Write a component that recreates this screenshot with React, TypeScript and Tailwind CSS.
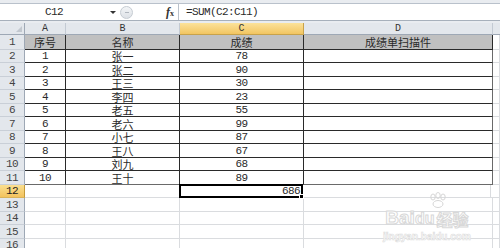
import React from 'react';

const numFont = { fontFamily: '"Liberation Mono", "Noto Sans CJK SC", monospace' };

const rows: [string, string, string][] = [
  ['1', '张一', '78'],
  ['2', '张二', '90'],
  ['3', '王三', '30'],
  ['4', '李四', '23'],
  ['5', '老五', '55'],
  ['6', '老六', '99'],
  ['7', '小七', '87'],
  ['8', '王八', '67'],
  ['9', '刘九', '68'],
  ['10', '王十', '89'],
];

// rows 2..16 alternate 13/14px so lines land on whole pixels
const heights = ['h-[13px]', 'h-[14px]'];

function RowHead({ n, active }: { n: number; active?: boolean }) {
  return (
    <div
      className={`w-[25px] shrink-0 flex items-center justify-center border-r border-b text-[11px] leading-[12px] tracking-[-0.6px] ${
        active
          ? 'bg-gradient-to-b from-[#fadf8f] to-[#f3c35e] border-r-[#c39a3a] border-b-[#d9b35a] text-[#222]'
          : 'bg-[#e3e7ec] border-r-[#9ea8b5] border-b-[#c9cfd7] text-[#444]'
      }`}
      style={numFont}
    >
      {n}
    </div>
  );
}

function Watermark() {
  return (
    <div className="absolute left-[383px] top-[192px] flex flex-col items-center pointer-events-none select-none">
      <svg width="22" height="16" viewBox="0 0 22 16" className="ml-[22px]">
        <g fill="none" stroke="#d6d6d6" strokeWidth="1">
          <ellipse cx="6" cy="5" rx="2.2" ry="3" />
          <ellipse cx="11" cy="3.5" rx="2.2" ry="3" />
          <ellipse cx="16" cy="5" rx="2.2" ry="3" />
          <ellipse cx="11" cy="12" rx="5" ry="3.5" />
        </g>
      </svg>
      <div
        className="flex items-end leading-none text-[19px] font-bold text-white"
        style={{ fontFamily: 'Arial, "Liberation Sans", sans-serif', WebkitTextStroke: '1px #d8d8d8' }}
      >
        <span>Bai</span>
        <span className="text-[16px]">du</span>
        <span className="ml-[2px] text-[16px]" style={{ fontFamily: '"Noto Sans CJK SC", sans-serif' }}>
          经验
        </span>
      </div>
      <div
        className="mt-[5px] text-[10px] leading-none text-white font-bold"
        style={{ fontFamily: 'Arial, "Liberation Sans", sans-serif', WebkitTextStroke: '0.6px #dcdcdc' }}
      >
        jingyan.baidu.com
      </div>
    </div>
  );
}

export default function App() {
  const grid = 'border-r border-b border-[#dadcdf]';
  const dark = 'border-r border-b border-[#2a2a2a]';
  const last = 'border-b-[#6a6a6a]';

  return (
    <div
      className="relative w-[500px] h-[248px] overflow-hidden bg-white text-[#2a2a2a]"
      style={{ fontFamily: '"Noto Sans CJK SC", sans-serif' }}
    >
      {/* ribbon edge */}
      <div className="h-[4px] bg-[#e9ecf0] border-b border-[#b9c1cb]" />

      {/* formula bar */}
      <div className="h-[17px] flex bg-white border-b border-[#a7b0bb]">
        <div className="w-[108px] flex items-center justify-center text-[11px] tracking-[-0.6px]" style={numFont}>
          C12
        </div>
        <div className="w-[10px] flex items-center justify-center">
          <span className="block w-0 h-0 border-l-[3px] border-r-[3px] border-t-[3px] border-l-transparent border-r-transparent border-t-[#333]" />
        </div>
        <div className="w-[45px] flex items-center pl-[2px]">
          <div className="w-[13px] h-[13px] rounded-full bg-gradient-to-b from-[#f3f5f7] to-[#dde1e6] border border-[#c5cbd2] flex items-center justify-center">
            <span className="block w-[4px] h-[1px] bg-[#b0b6be]" />
          </div>
        </div>
        <div className="w-[14px] flex items-center justify-center">
          <span className="text-[12px] leading-none italic font-bold text-[#333]" style={{ fontFamily: '"Liberation Serif", serif' }}>
            f<span className="text-[8px] not-italic">x</span>
          </span>
        </div>
        <div className="w-[2px] border-r border-[#b9c1cb]" />
        <div className="flex-1 flex items-center pl-[7px] text-[11px] tracking-[-0.6px]" style={numFont}>
          =SUM(C2:C11)
        </div>
      </div>

      <div className="h-[2px] bg-[#e9ecf0]" />

      {/* column headers */}
      <div className="h-[12px] flex text-[10px] leading-none text-[#333]" style={numFont}>
        <div className="w-[25px] bg-[#e3e7ec] border-r border-b border-[#9ea8b5] flex items-end justify-end p-[2px]">
          <svg width="6" height="6" viewBox="0 0 6 6">
            <path d="M6 0 L6 6 L0 6 Z" fill="#c2c8cf" />
          </svg>
        </div>
        <div className="w-[41px] bg-[#e3e7ec] border-r border-b border-r-[#c3cad3] border-b-[#9ea8b5] flex items-center justify-center">A</div>
        <div className="w-[114px] bg-[#e3e7ec] border-r border-b border-r-[#c3cad3] border-b-[#9ea8b5] flex items-center justify-center">B</div>
        <div className="w-[124px] bg-gradient-to-b from-[#fbe29a] to-[#f2c560] border-r border-b border-r-[#c8a24a] border-b-[#c8a24a] flex items-center justify-center">C</div>
        <div className="w-[189px] bg-[#e3e7ec] border-r border-b border-r-[#c3cad3] border-b-[#9ea8b5] flex items-center justify-center">D</div>
        <div className="flex-1 bg-[#e3e7ec] border-b border-[#9ea8b5]" />
      </div>

      {/* row 1 */}
      <div className="h-[15px] flex text-[11px] leading-[13px]">
        <RowHead n={1} />
        <div className={`w-[41px] bg-[#c0c0c0] ${dark} flex items-center justify-center`}>序号</div>
        <div className={`w-[114px] bg-[#c0c0c0] ${dark} flex items-center justify-center`}>名称</div>
        <div className={`w-[124px] bg-[#c0c0c0] ${dark} flex items-center justify-center`}>成绩</div>
        <div className={`w-[189px] bg-[#c0c0c0] ${dark} flex items-center justify-center`}>成绩单扫描件</div>
        <div className={`flex-1 ${grid}`} />
      </div>

      {/* data rows 2-11 */}
      {rows.map(([n, name, score], i) => (
        <div key={n} className={`${heights[i % 2]} flex text-[11px] leading-[12px]`}>
          <RowHead n={i + 2} />
          <div className={`w-[41px] ${dark} ${i === 9 ? last : ''} flex items-center justify-center tracking-[-0.6px]`} style={numFont}>
            {n}
          </div>
          <div className={`w-[114px] ${dark} ${i === 9 ? last : ''} flex items-center justify-center`}>{name}</div>
          <div className={`w-[124px] ${dark} ${i === 9 ? last : ''} flex items-center justify-center tracking-[-0.6px]`} style={numFont}>
            {score}
          </div>
          <div className={`w-[189px] ${dark} border-r-[#6a6a6a] ${i === 9 ? last : ''}`} />
          <div className={`flex-1 ${grid}`} />
        </div>
      ))}

      {/* rows 12-16 */}
      {[12, 13, 14, 15, 16].map((r, i) => (
        <div key={r} className={`${heights[i % 2]} flex text-[11px] leading-[12px]`}>
          <RowHead n={r} active={r === 12} />
          <div className={`w-[41px] ${grid}`} />
          <div className={`w-[114px] ${grid}`} />
          {r === 12 ? (
            <div className="w-[124px] relative border-2 border-black -mt-[1px] -ml-[1px] mr-[-1px] flex items-center justify-end pr-[1px] tracking-[-0.6px]" style={numFont}>
              686
              <span className="absolute -right-[3px] -bottom-[3px] w-[5px] h-[5px] bg-black border border-white" />
            </div>
          ) : (
            <div className={`w-[124px] ${grid}`} />
          )}
          <div className={`w-[189px] ${grid}`} />
          <div className={`flex-1 ${grid}`} />
        </div>
      ))}

      <Watermark />
    </div>
  );
}
